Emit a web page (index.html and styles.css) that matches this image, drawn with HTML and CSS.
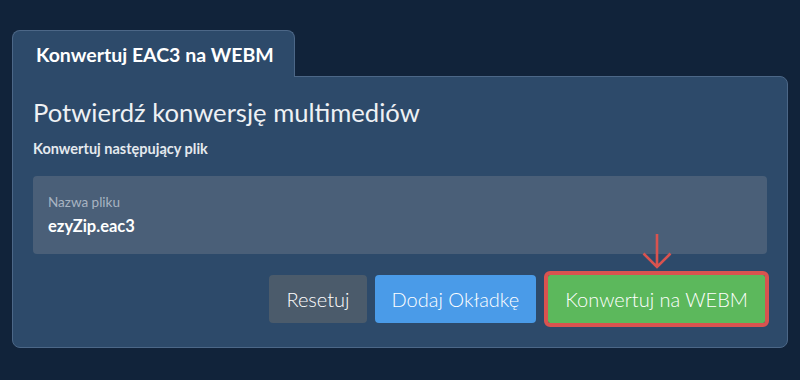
FILE: index.html
```html
<!DOCTYPE html>
<html lang="pl">
<head>
    <meta charset="UTF-8">
    <meta name="viewport" content="width=device-width, initial-scale=1.0">
    <title>Konwertuj EAC3 na WEBM</title>
    <link rel="stylesheet" href="styles.css">
</head>
<body>
    <div class="converter">
        <div class="tab">Konwertuj EAC3 na WEBM</div>
        <div class="card">
            <h1 class="card-title">Potwierdź konwersję multimediów</h1>
            <p class="card-subtitle">Konwertuj następujący plik</p>

            <div class="file-box">
                <div class="file-label">Nazwa pliku</div>
                <div class="file-name">ezyZip.eac3</div>
            </div>

            <div class="actions">
                <button class="btn btn-reset">Resetuj</button>
                <button class="btn btn-cover">Dodaj Okładkę</button>
                <div class="convert-wrap">
                    <svg class="hint-arrow" width="30" height="36" viewBox="0 0 30 36">
                        <path d="M15 1 V34 M1.5 20.5 L15 34 L28.5 20.5" fill="none" stroke="#d9534f" stroke-width="2.6"/>
                    </svg>
                    <button class="btn btn-convert">Konwertuj na WEBM</button>
                </div>
            </div>
        </div>
    </div>
</body>
</html>
```

FILE: styles.css
```css
body {
    margin: 0;
    background: #11233a;
    font-family: Lato, "Open Sans", sans-serif;
    color: #fff;
}
.converter {
    width: 776px;
    padding: 30px 12px 0;
}
.tab {
    position: relative;
    z-index: 1;
    display: inline-block;
    width: 283px;
    box-sizing: border-box;
    padding: 12px 0 10px 23px;
    margin-bottom: -1px;
    background: #2d4a6a;
    border: 1px solid #4c6787;
    border-bottom: none;
    border-radius: 8px 8px 0 0;
    font-size: 19.5px;
    font-weight: 700;
    line-height: 24px;
    white-space: nowrap;
}
.card {
    background: #2d4a6a;
    border: 1px solid #4c6787;
    border-radius: 0 8px 8px 8px;
    padding: 21px 20px 24px;
}
.card-title {
    margin: 0;
    font-size: 25.6px;
    font-weight: 400;
    line-height: 29px;
    color: #eef1f4;
}
.card-subtitle {
    margin: 13px 0 0;
    font-size: 14.5px;
    font-weight: 700;
    line-height: 17px;
    color: #e4e9ee;
}
.file-box {
    margin-top: 19px;
    height: 78px;
    box-sizing: border-box;
    padding: 18px 15px 0;
    background: #4a5f78;
    border-radius: 4px;
}
.file-label {
    font-size: 13.5px;
    line-height: 16px;
    color: #a8b4c2;
}
.file-name {
    margin-top: 6px;
    font-size: 16.5px;
    font-weight: 700;
    line-height: 20px;
}
.actions {
    display: flex;
    justify-content: flex-end;
    gap: 8px;
    margin-top: 21px;
    padding-right: 2px;
}
.btn {
    height: 48px;
    padding: 0 17px;
    border: none;
    border-radius: 4px;
    font-family: inherit;
    font-size: 20px;
    font-weight: 300;
    color: #fff;
    cursor: pointer;
}
.btn-reset { background: #4b5b6b; }
.btn-cover { background: #4a9be8; }
.convert-wrap {
    position: relative;
    margin-left: 4px;
}
.btn-convert {
    background: #5cb85c;
    outline: 4px solid #d9534f;
    border-radius: 2px;
}
.hint-arrow {
    position: absolute;
    left: 50%;
    bottom: 100%;
    margin-left: -15px;
    margin-bottom: 6px;
}
```
